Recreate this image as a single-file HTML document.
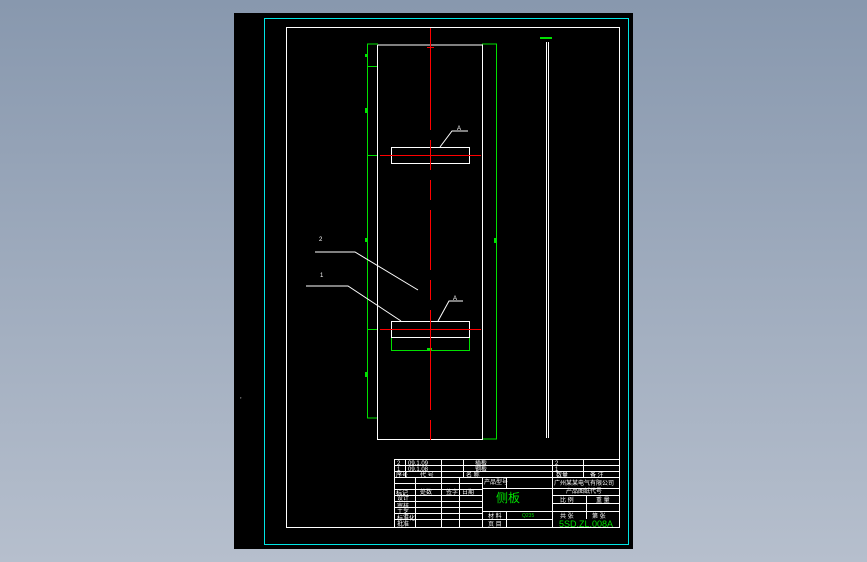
<!DOCTYPE html>
<html><head><meta charset="utf-8"><style>
html,body{margin:0;padding:0;width:867px;height:562px;overflow:hidden;background:linear-gradient(#8898ae,#b6bfcd);}
svg{display:block}
text{font-family:"Liberation Sans","Noto Sans CJK SC",sans-serif;}
</style></head><body>
<svg width="867" height="562" viewBox="0 0 867 562" xmlns="http://www.w3.org/2000/svg" shape-rendering="crispEdges">
<rect x="234" y="13" width="399" height="536" fill="#000"/>
<rect x="264.5" y="18.5" width="364" height="526" fill="none" stroke="#00e5e5" stroke-width="1.2"/>
<rect x="286.5" y="27.5" width="333" height="500" fill="none" stroke="#fff"/>
<text x="240" y="398" fill="#fff" font-size="6">,</text>
<!-- green outline -->
<g stroke="#00e000" fill="none">
<polyline points="378,44 367.5,44 367.5,418 378,418"/>
<polyline points="482,44 496.5,44 496.5,439 482,439"/>
<line x1="367.5" y1="66.5" x2="378" y2="66.5"/>
<line x1="367.5" y1="155.5" x2="378" y2="155.5"/>
<line x1="367.5" y1="329.5" x2="378" y2="329.5"/>
<polyline points="391.5,337 391.5,350.5 469.5,350.5 469.5,337"/>
</g>
<g fill="#00e000"><rect x="365" y="54" width="2" height="3"/><rect x="365" y="108" width="2" height="5"/><rect x="365" y="238" width="2" height="4"/><rect x="494" y="238" width="2" height="5"/><rect x="365" y="372" width="2" height="5"/><rect x="540" y="37" width="12" height="2"/><rect x="427" y="348" width="5" height="2"/></g>
<!-- white plate -->
<g stroke="#fff" fill="none">
<polyline points="377.5,45 377.5,439.5 482.5,439.5 482.5,45 377.5,45" stroke-width="1.4"/>
<rect x="391.5" y="147.5" width="78" height="16"/>
<rect x="391.5" y="321.5" width="78" height="16"/>
<line x1="546.5" y1="42" x2="546.5" y2="438"/>
<line x1="548.5" y1="42" x2="548.5" y2="438"/>
<polyline points="440,147 452,131 468,131" shape-rendering="auto"/>
<polyline points="438,321 449,301 463,301" shape-rendering="auto"/>
<polyline points="315,252 355,252 418,290" shape-rendering="auto"/>
<polyline points="306,286 348,286 401,321" shape-rendering="auto"/>
</g>
<text x="457" y="130" fill="#fff" font-size="6">A</text>
<text x="453" y="300" fill="#fff" font-size="6">A</text>
<text x="319" y="241" fill="#fff" font-size="6">2</text>
<text x="320" y="277" fill="#fff" font-size="6">1</text>
<!-- red centre -->
<g stroke="#f00" fill="none">
<line x1="430.5" y1="28" x2="430.5" y2="130" />
<line x1="430.5" y1="140" x2="430.5" y2="170"/>
<line x1="430.5" y1="180" x2="430.5" y2="200"/>
<line x1="430.5" y1="210" x2="430.5" y2="270"/>
<line x1="430.5" y1="280" x2="430.5" y2="300"/>
<line x1="430.5" y1="310" x2="430.5" y2="410"/>
<line x1="430.5" y1="420" x2="430.5" y2="440"/>
<line x1="380" y1="155.5" x2="481" y2="155.5"/>
<line x1="380" y1="329.5" x2="481" y2="329.5"/>
<line x1="427" y1="47.5" x2="434" y2="47.5"/>
</g>
<!-- title block -->
<g stroke="#fff" fill="none" stroke-width="1">
<rect x="394.5" y="459.5" width="225" height="68"/>
<line x1="394" y1="465.5" x2="620" y2="465.5"/>
<line x1="394" y1="471.5" x2="620" y2="471.5"/>
<line x1="394" y1="477.5" x2="620" y2="477.5"/>
<line x1="394" y1="483.5" x2="482" y2="483.5"/>
<line x1="394" y1="489.5" x2="482" y2="489.5"/>
<line x1="394" y1="495.5" x2="482" y2="495.5"/>
<line x1="394" y1="501.5" x2="482" y2="501.5"/>
<line x1="394" y1="507.5" x2="482" y2="507.5"/>
<line x1="394" y1="513.5" x2="482" y2="513.5"/>
<line x1="394" y1="519.5" x2="482" y2="519.5"/>
<line x1="482" y1="488.5" x2="552" y2="488.5"/>
<line x1="482" y1="511.5" x2="620" y2="511.5"/>
<line x1="482" y1="519.5" x2="552" y2="519.5"/>
<line x1="552" y1="488.5" x2="620" y2="488.5"/>
<line x1="552" y1="495.5" x2="620" y2="495.5"/>
<line x1="552" y1="503.5" x2="620" y2="503.5"/>
<line x1="415.5" y1="477" x2="415.5" y2="528"/>
<line x1="405.5" y1="459" x2="405.5" y2="477"/>
<line x1="441.5" y1="459" x2="441.5" y2="528"/>
<line x1="459.5" y1="477" x2="459.5" y2="528"/>
<line x1="463.5" y1="459" x2="463.5" y2="477"/>
<line x1="482.5" y1="477" x2="482.5" y2="528"/>
<line x1="506.5" y1="477" x2="506.5" y2="488"/>
<line x1="506.5" y1="511" x2="506.5" y2="528"/>
<line x1="552.5" y1="459" x2="552.5" y2="528"/>
<line x1="583.5" y1="459" x2="583.5" y2="477"/>
<line x1="586.5" y1="495" x2="586.5" y2="519"/>
</g>
<g fill="#fff" font-size="6">
<text x="397" y="465">2</text><text x="408" y="465">09.1.09</text><text x="475" y="465">插板</text>
<text x="397" y="471">1</text><text x="408" y="471">09.1.08</text><text x="475" y="471">钢板</text>
<text x="396" y="477">序号</text><text x="420" y="477">代 号</text><text x="466" y="477">名 称</text>
<text x="555" y="465">2</text><text x="555" y="471">1</text><text x="556" y="477">数量</text><text x="590" y="477">备 注</text>
<text x="484" y="484">产品型号</text>
<text x="554" y="485">广州某某电气有限公司</text><text x="566" y="493">产品图纸代号</text>
<text x="396" y="495">标记</text><text x="420" y="494">处数</text><text x="446" y="494">签字</text><text x="462" y="494">日期</text>
<text x="397" y="500">设计</text><text x="397" y="508">审核</text><text x="397" y="514">工艺</text><text x="397" y="520">标准化</text><text x="397" y="526">批准</text>
<text x="560" y="502">比 例</text><text x="596" y="502">重 量</text>
<text x="488" y="518">材 料</text><text x="488" y="526">页 目</text>
<text x="560" y="518">共 张</text><text x="592" y="518">第 张</text>
</g>
<text x="496" y="502" fill="#00e000" font-size="12">侧板</text>
<text x="522" y="517" fill="#00e000" font-size="5">Q235</text>
<text x="559" y="527" fill="#00e000" font-size="9">5SD.ZL.008A</text>
</svg>
</body></html>
